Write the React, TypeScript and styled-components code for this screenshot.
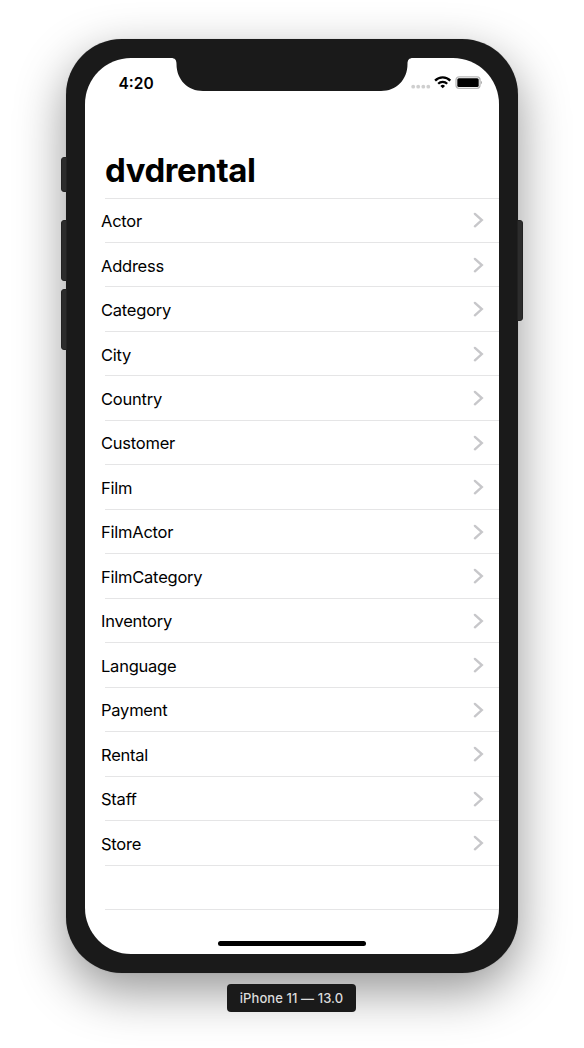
import React from 'react';
import styled, { createGlobalStyle } from 'styled-components';

const GlobalStyle = createGlobalStyle`
  *, *::before, *::after { box-sizing: border-box; }
  body {
    margin: 0;
    background: #fff;
    color: #000;
    font-family: Inter, 'Liberation Sans', sans-serif;
  }
`;

const Stage = styled.main`
  display: flex;
  flex-direction: column;
  align-items: center;
  height: 1048px;
  padding-top: 39px;
  overflow: hidden;
`;

const Device = styled.div`
  position: relative;
  width: 452px;
  height: 934px;
  padding: 19px;
  border-radius: 56px;
  background: #1a1a1a;
  box-shadow: 0 0 1px rgba(0, 0, 0, 0.25), 0 18px 50px rgba(0, 0, 0, 0.42);
`;

const SideButton = styled.span<{ $side: 'left' | 'right'; $top: number; $length: number }>`
  position: absolute;
  ${({ $side }) => $side}: -5px;
  top: ${({ $top }) => $top}px;
  width: 6px;
  height: ${({ $length }) => $length}px;
  background: #2c2c2c;
  border: 1px solid #222;
  border-radius: ${({ $side }) => ($side === 'left' ? '3px 0 0 3px' : '0 3px 3px 0')};
`;

const Screen = styled.div`
  position: relative;
  display: flex;
  flex-direction: column;
  width: 414px;
  height: 896px;
  border-radius: 46px;
  background: #fff;
  overflow: hidden;
`;

const Notch = styled.svg`
  position: absolute;
  top: 0;
  left: 86px;
  width: 242px;
  height: 33px;
`;

const StatusBar = styled.header`
  display: flex;
  justify-content: space-between;
  align-items: center;
  height: 50px;
  padding: 0 17px 0 33.5px;
`;

const Time = styled.span`
  font-size: 15.5px;
  font-weight: 600;
  letter-spacing: 0;
`;

const Indicators = styled.svg`
  width: 71px;
  height: 14px;
`;

const Title = styled.h1`
  height: 89.53px;
  margin: 0;
  padding: 40px 0 0 20px;
  font-size: 33px;
  line-height: 44px;
  font-weight: 700;
  letter-spacing: -0.42px;
`;

const List = styled.ul`
  margin: 0;
  padding: 0;
  list-style: none;
`;

const Divider = styled.div`
  height: 1px;
  margin: 0 0 -1px 20px;
  background: #e5e5e6;
`;

const Row = styled.li`
  height: 44.47px;
`;

const RowBody = styled.div`
  display: flex;
  justify-content: space-between;
  align-items: center;
  height: 44.47px;
  padding: 1.4px 15px 0 16px;
`;

const Label = styled.span`
  padding-top: 1.4px;
  font-size: 16.5px;
  line-height: 22px;
  letter-spacing: -0.23px;
`;

const Chevron = styled.svg`
  width: 11px;
  height: 16px;
`;

const HomeIndicator = styled.div`
  width: 148px;
  height: 5px;
  margin: auto auto 8px;
  border-radius: 3px;
  background: #000;
`;

const Caption = styled.div`
  display: flex;
  justify-content: center;
  align-items: center;
  width: 129px;
  height: 28px;
  margin: 11px 1px 0 0;
  border-radius: 4px;
  background: #1a1a1a;
  color: #dcdcdc;
  font-size: 13px;
  font-weight: 500;
  letter-spacing: 0.08px;
  white-space: nowrap;
  z-index: 1;
`;

const tables = [
  'Actor', 'Address', 'Category', 'City', 'Country', 'Customer', 'Film', 'FilmActor',
  'FilmCategory', 'Inventory', 'Language', 'Payment', 'Rental', 'Staff', 'Store',
];

export default function App() {
  return (
    <>
      <GlobalStyle />
      <Stage>
        <Device>
          <SideButton $side="left" $top={118} $length={35} />
          <SideButton $side="left" $top={181} $length={61} />
          <SideButton $side="left" $top={250} $length={61} />
          <SideButton $side="right" $top={181} $length={101} />
          <Screen>
            <StatusBar>
              <Time>4:20</Time>
              <Indicators viewBox="0 0 71 14">
                <g fill="#cfcfcf">
                  <circle cx="2.2" cy="10.7" r="1.9" />
                  <circle cx="7.2" cy="10.7" r="1.9" />
                  <circle cx="12.3" cy="10.7" r="1.9" />
                  <circle cx="17.3" cy="10.7" r="1.9" />
                </g>
                <g fill="none" stroke="#000" strokeWidth="2.3">
                  <path d="M24.100 4.600a10.600 10.600 0 0 1 15.200 0" />
                  <path d="M27.200 7.700a6.400 6.400 0 0 1 9 0" />
                </g>
                <path d="M31.700 12.300l-2.300-2.400a3.300 3.300 0 0 1 4.600 0z" />
                <rect x="45" y="0.9" width="24" height="11.4" rx="3" fill="#fff" stroke="#b8b8b8" strokeWidth="1.3" />
                <rect x="46.300" y="2.200" width="21.400" height="8.800" rx="1.500" />
                <path d="M69.800 4.800q1.200.5 1.200 1.800t-1.200 1.800z" fill="#aaa" />
              </Indicators>
            </StatusBar>
            <Notch viewBox="0 0 242 33">
              <path d="M0 0h242c-4 0-5.500 2-5.500 6C236.500 22 225 33 210 33H32C17 33 5.500 22 5.500 6 5.500 2 4 0 0 0z" fill="#1a1a1a" />
            </Notch>
            <Title>dvdrental</Title>
            <List>
              {tables.map((name) => (
                <Row key={name}>
                  <Divider />
                  <RowBody>
                    <Label>{name}</Label>
                    <Chevron viewBox="0 0 11 16" fill="none" stroke="#c7c7ca" strokeWidth="2.4" strokeLinecap="round">
                      <path d="M1.900 1.900L8.800 8.100 1.900 14.300" />
                    </Chevron>
                  </RowBody>
                </Row>
              ))}
              <Row><Divider /></Row>
            </List>
            <Divider />
            <HomeIndicator />
          </Screen>
        </Device>
        <Caption>iPhone 11 — 13.0</Caption>
      </Stage>
    </>
  );
}
